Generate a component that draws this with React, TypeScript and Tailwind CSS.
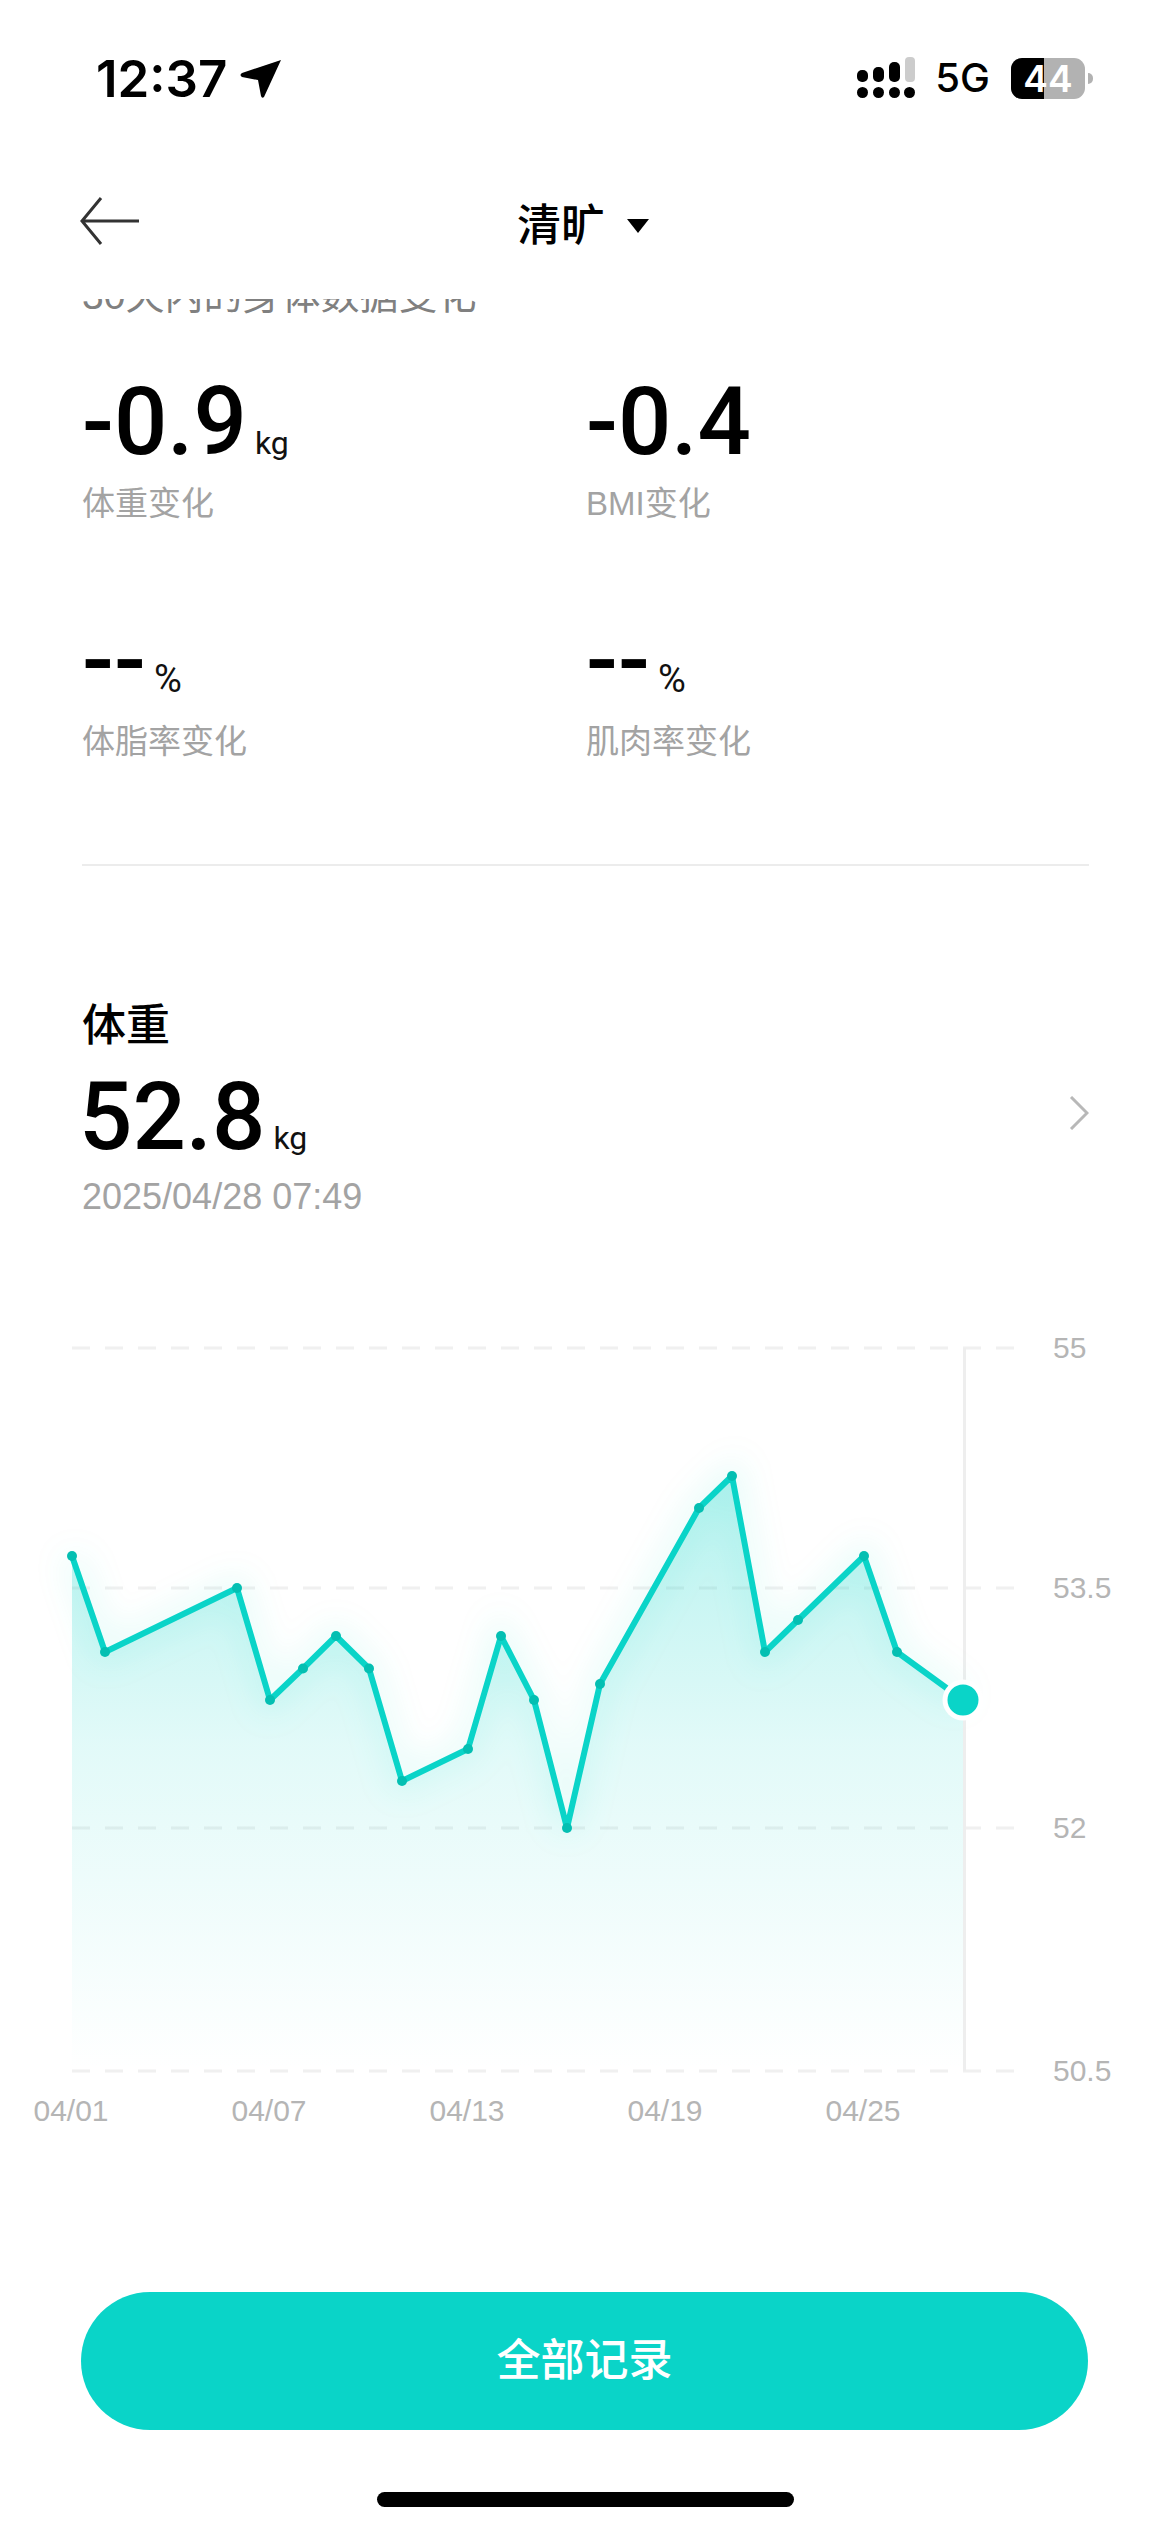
import React from "react";

const points: [number, number][] = [
  [72, 1557], [105, 1653], [237, 1589], [270, 1701], [303, 1669.5], [336, 1637],
  [369, 1669.5], [402, 1782], [468, 1750], [501, 1637], [534, 1701], [567, 1829],
  [600, 1685], [699, 1509], [732, 1477], [765, 1653], [798, 1621], [864, 1557],
  [897, 1653], [963, 1701],
];
const top = 1320;
const linePath = points.map(([x, y]) => `${x},${y - top}`).join(" ");
const areaPath = `${linePath} 963,${2072 - top} 72,${2072 - top}`;
const grid: [number, string][] = [[1349, "55"], [1589, "53.5"], [1829, "52"], [2072, "50.5"]];
const xLabels: [number, string][] = [[71, "04/01"], [269, "04/07"], [467, "04/13"], [665, "04/19"], [863, "04/25"]];

const Metric = ({ value, unit, label, gap }: { value: string; unit?: string; label: string; gap: string }) => (
  <div className={gap}>
    <div className="flex h-[92px] items-baseline leading-[92px]">
      <span className="font-['Roboto','Liberation_Sans',sans-serif] text-[94px] font-medium text-black">{value}</span>
      {unit && (
        <span className={`ml-[8px] font-['Roboto','Liberation_Sans',sans-serif] text-[#111] ${unit === "%" ? "text-[38px]" : "text-[32px]"}`}>
          {unit}
        </span>
      )}
    </div>
    <div className="mt-[16px] text-[33px] leading-[40px] text-[#a3a3a3]">{label}</div>
  </div>
);

const Chart = () => (
  <svg width="1170" height="820" viewBox="0 0 1170 820" className="block">
    <defs>
      <linearGradient id="fade" x1="0" y1="0" x2="0" y2="1">
        <stop offset="0" stopColor="#0ad4c8" stopOpacity="0.3" />
        <stop offset="0.45" stopColor="#0ad4c8" stopOpacity="0.12" />
        <stop offset="1" stopColor="#0ad4c8" stopOpacity="0" />
      </linearGradient>
      <filter id="glow" x="-10%" y="-20%" width="120%" height="140%">
        <feGaussianBlur stdDeviation="16" />
      </filter>
    </defs>
    {grid.map(([y, t]) => (
      <g key={t}>
        <line x1="72" x2="1014" y1={y - top} y2={y - top} stroke="#f0f0f0" strokeWidth="3" strokeDasharray="18 15" />
        <text x="1053" y={y - top + 10} fontSize="30" fill="#b5b5b5" fontFamily="Liberation Sans, sans-serif">{t}</text>
      </g>
    ))}
    <line x1="964.5" x2="964.5" y1={1349 - top} y2={2072 - top} stroke="#eeeeee" strokeWidth="3" />
    <polygon points={areaPath} fill="url(#fade)" />
    <polyline points={linePath} fill="none" stroke="#0ad4c8" strokeWidth="20" strokeOpacity="0.1" filter="url(#glow)" />
    <polyline points={linePath} fill="none" stroke="#0ad4c8" strokeWidth="6" strokeLinejoin="round" />
    {points.slice(0, -1).map(([x, y]) => (
      <circle key={x} cx={x} cy={y - top} r="5" fill="#04bfb2" />
    ))}
    <circle cx="963" cy={1701 - top} r="20.5" fill="#ffffff" />
    <circle cx="963" cy={1701 - top} r="15.5" fill="#0ad4c8" />
    {xLabels.map(([x, t]) => (
      <text key={t} x={x} y={2122 - top} textAnchor="middle" fontSize="30" fill="#b5b5b5" fontFamily="Liberation Sans, sans-serif">{t}</text>
    ))}
  </svg>
);

export default function App() {
  return (
    <div className="flex h-[2532px] w-[1170px] flex-col overflow-hidden bg-white font-['Liberation_Sans','Noto_Sans_CJK_SC',sans-serif]">
      {/* status bar */}
      <div className="flex h-[156px] items-center justify-between pl-[96px] pr-[77px]">
        <div className="flex items-center gap-[13px]">
          <span className="font-['Inter','Liberation_Sans',sans-serif] text-[51px] font-semibold leading-none text-black">12:37</span>
          <svg width="42" height="40" viewBox="0 0 42 40">
            <path d="M41 2 L24 39 Q22 41 21 38 L18 22 L2 19 Q-1 17 2 15 Z" fill="#000" />
          </svg>
        </div>
        <div className="flex items-center">
          <svg width="58" height="42" viewBox="0 0 58 42">
            <rect x="0" y="13" width="11" height="12" rx="5" />
            <rect x="16" y="10" width="11" height="15" rx="5" />
            <rect x="32" y="5" width="11" height="20" rx="5" />
            <rect x="48" y="0" width="10" height="25" rx="4" fill="#cccccc" />
            <rect x="0" y="30" width="11" height="11" rx="5.5" />
            <rect x="16" y="30" width="11" height="11" rx="5.5" />
            <rect x="32" y="30" width="11" height="11" rx="5.5" />
            <rect x="47" y="30" width="11" height="11" rx="5.5" />
          </svg>
          <span className="ml-[20px] font-['Inter','Liberation_Sans',sans-serif] text-[40px] font-medium leading-none text-black">5G</span>
          <div className="relative ml-[21px] h-[41px] w-[74px] rounded-[11px] bg-[#b2b2b2]">
            <div className="absolute inset-y-0 left-0 w-[33px] rounded-l-[11px] bg-black" />
            <div className="absolute inset-0 flex items-center justify-center font-['Inter','Liberation_Sans',sans-serif] text-[37px] font-semibold leading-none text-white">44</div>
          </div>
          <div className="ml-[3px] h-[11px] w-[5px] rounded-r-full bg-[#b2b2b2]" />
        </div>
      </div>

      {/* nav */}
      <div className="grid h-[143px] grid-cols-[1fr_auto_1fr] pl-[80px]">
        <svg width="60" height="48" viewBox="0 0 60 48" className="mt-[41px]" fill="none" stroke="#333" strokeWidth="3">
          <path d="M59 24 H2 M21 1 L2 24 L21 47" />
        </svg>
        <div className="mt-[48px] flex h-[44px] items-center pr-[84px]">
          <span className="text-[44px] font-medium leading-none text-black">清旷</span>
          <svg width="22" height="14" viewBox="0 0 22 14" className="ml-[22px]"><path d="M0 0 H22 L11 14 Z" fill="#000" /></svg>
        </div>
      </div>

      <div className="flex-1 overflow-hidden">
        <div className="pl-[82px] pr-[81px]">
          <div className="-mt-[23px] text-[39px] leading-[40px] text-[#808080]">30天内的身体数据变化</div>
          <div className="mt-[60px] grid grid-cols-[504px_1fr]">
            <Metric value="-0.9" unit="kg" label="体重变化" gap="mb-[90px]" />
            <Metric value="-0.4" label="BMI变化" gap="mb-[90px]" />
            <Metric value="--" unit="%" label="体脂率变化" gap="" />
            <Metric value="--" unit="%" label="肌肉率变化" gap="" />
          </div>
          <div className="mt-[102px] h-[2px] bg-[#ececec]" />
          <div className="mt-[136px] text-[44px] font-medium leading-[48px] text-black">体重</div>
          <div className="flex items-center justify-between">
            <div className="-ml-[3px] mt-[21px] flex h-[92px] items-baseline leading-[92px]">
              <span className="font-['Roboto','Liberation_Sans',sans-serif] text-[94px] font-medium text-black">52.8</span>
              <span className="ml-[8px] font-['Roboto','Liberation_Sans',sans-serif] text-[32px] text-[#111]">kg</span>
            </div>
            <svg width="20" height="34" viewBox="0 0 20 34" fill="none" stroke="#b8b8b8" strokeWidth="3" className="mt-[13px]">
              <path d="M2 1 L18 17 L2 33" />
            </svg>
          </div>
          <div className="mt-[12px] text-[36px] leading-[44px] text-[#a3a3a3]">2025/04/28 07:49</div>
        </div>
        <div className="mt-[100px]">
          <Chart />
        </div>
        <div className="ml-[81px] mt-[153px] flex h-[138px] w-[1007px] items-center justify-center rounded-full bg-[#0ad4c8] text-[44px] font-medium text-white">
          全部记录
        </div>
        <div className="mx-auto mt-[62px] h-[15px] w-[417px] rounded-full bg-black" />
      </div>
    </div>
  );
}
